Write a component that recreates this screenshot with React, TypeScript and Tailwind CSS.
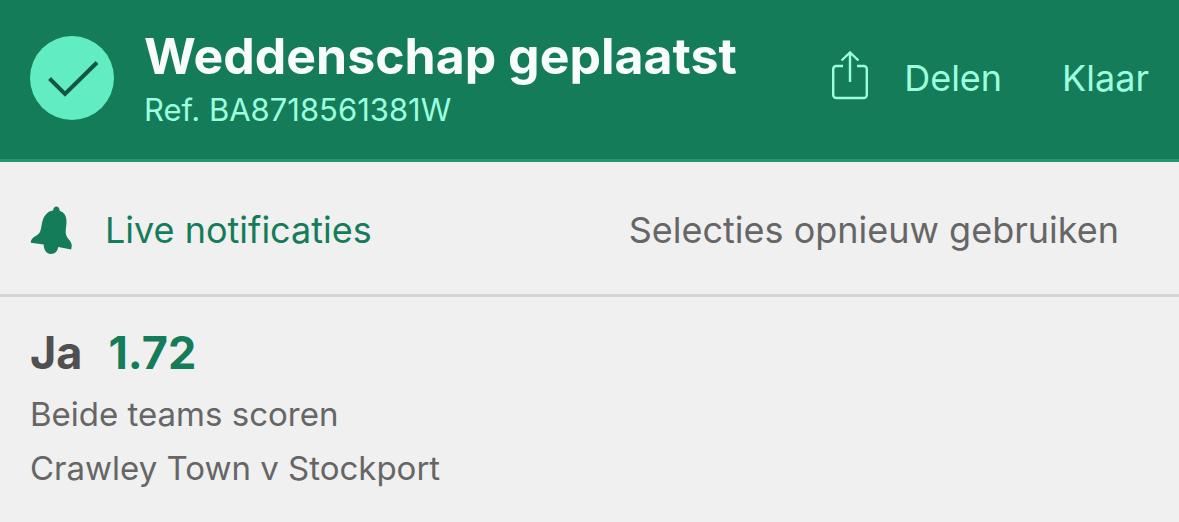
export default function App() {
  return (
    <main className="min-h-screen bg-[#f0f0f0] font-['Inter',sans-serif] text-[#666666]">
      <header className="flex items-center border-b-3 border-[#27966d] bg-[#157c5a] pt-[26px] pr-[30px] pb-[29px] pl-[30px] text-[#9dffdf]">
        <svg viewBox="0 0 84 84" className="size-[84px] shrink-0" aria-hidden="true">
          <circle cx="42" cy="42" r="42" fill="#61edc1" />
          <path d="M19.5 42.5 35 58 67 26.5" fill="none" stroke="#155442" strokeWidth="4" />
        </svg>
        <div className="ml-[30px] flex-1">
          <h1 className="text-[50px] leading-[60px] font-bold text-[#f8fcfb]">Weddenschap geplaatst</h1>
          <p className="mt-1 text-[31px] leading-10">Ref. BA8718561381W</p>
        </div>
        <button type="button" className="flex items-center gap-9 text-4xl">
          <svg viewBox="0 0 36 54" className="h-[54px] w-9" fill="none" stroke="currentColor" strokeWidth="2.4" aria-hidden="true">
            <path d="M11 15H4.2a3 3 0 0 0-3 3v26a3 3 0 0 0 3 3h27.6a3 3 0 0 0 3-3V18a3 3 0 0 0-3-3H25M18 31V1.5M9.5 9.5 18 1.5l8.5 8" />
          </svg>
          Delen
        </button>
        <button type="button" className="ml-15 text-4xl">Klaar</button>
      </header>
      <div className="flex items-center justify-between border-b-3 border-[#d4d4d4] pt-11 pr-15 pb-10 pl-[30px] text-4xl">
        <button type="button" className="flex items-center gap-[33px] text-[#157c5a]">
          <svg viewBox="0 0 42 48" className="h-12 w-[42px]" fill="currentColor" aria-hidden="true">
            <path d="M23.2 4.2C23.5-.9 29.6-.7 29.7 4.8 33.5 6 35.8 9 36.3 13 37 19 35 24 36 28.5 37 33 41.4 34.5 41.8 39.5L41.2 43.4 28.2 41C27.5 45 25.5 48 20.7 48 16.5 48 13.7 44 13.7 38.6L.8 36.7C1 30 7.5 31 10 26 12 21 11.5 13.5 15.5 9 17.5 6 20 5 23.2 4.2Z" />
          </svg>
          Live notificaties
        </button>
        <button type="button">Selecties opnieuw gebruiken</button>
      </div>
      <section className="px-[30px] pt-[30px]">
        <h2 className="flex gap-[26px] text-[45px] leading-[52px] font-bold text-[#505050]">
          Ja <span className="text-[#157c5a]">1.72</span>
        </h2>
        <p className="mt-2 text-[33px] leading-[54px]">Beide teams scoren</p>
        <p className="text-[33px] leading-[54px]">Crawley Town v Stockport</p>
      </section>
    </main>
  );
}
